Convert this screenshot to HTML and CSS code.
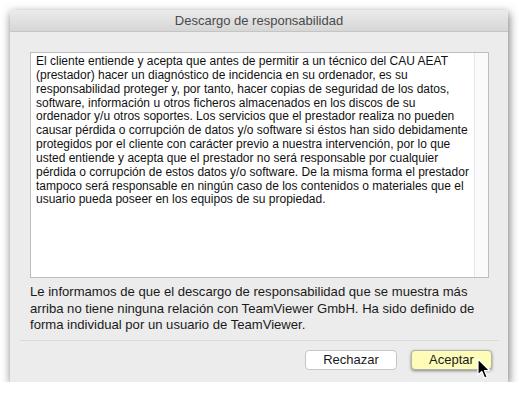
FILE: index.html
```html
<!DOCTYPE html>
<html>
<head>
    <title>Descargo de responsabilidad</title>
    <meta charset="UTF-8">
    <link rel="stylesheet" href="styles.css">
</head>
<body>
<div class="window">
    <div class="titlebar">Descargo de responsabilidad</div>

    <div class="content">
        <div class="textbox">
            <div class="text">
                El cliente entiende y acepta que antes de permitir a un técnico del CAU AEAT<br>
                (prestador) hacer un diagnóstico de incidencia en su ordenador, es su<br>
                responsabilidad proteger y, por tanto, hacer copias de seguridad de los datos,<br>
                software, información u otros ficheros almacenados en los discos de su<br>
                ordenador y/u otros soportes. Los servicios que el prestador realiza no pueden<br>
                causar pérdida o corrupción de datos y/o software si éstos han sido debidamente<br>
                protegidos por el cliente con carácter previo a nuestra intervención, por lo que<br>
                usted entiende y acepta que el prestador no será responsable por cualquier<br>
                pérdida o corrupción de estos datos y/o software. De la misma forma el prestador<br>
                tampoco será responsable en ningún caso de los contenidos o materiales que el<br>
                usuario pueda poseer en los equipos de su propiedad.
            </div>
            <div class="scrolltrack"></div>
        </div>

        <p class="notice">
            Le informamos de que el descargo de responsabilidad que se muestra más<br>
            arriba no tiene ninguna relación con TeamViewer GmbH. Ha sido definido de<br>
            forma individual por un usuario de TeamViewer.
        </p>
    </div>

    <div class="separator"></div>

    <div class="buttons">
        <button class="btn">Rechazar</button>
        <button class="btn default">Aceptar</button>
    </div>

    <svg class="cursor" width="14" height="22" viewBox="0 0 14 22">
        <path d="M1 1 L1 17 L4.8 13.4 L7.6 20 L10.2 18.9 L7.5 12.5 L12.6 12.5 Z" fill="#000" stroke="#fff" stroke-width="1.2" stroke-linejoin="round"/>
    </svg>
</div>
</body>
</html>
```

FILE: styles.css
```css
body {
    margin: 0;
    background: #fff;
    font-family: "Liberation Sans", Arial, sans-serif;
}
.window {
    position: relative;
    margin: 10px 0 0 10px;
    width: 498px;
    height: 372px;
    background: #ececec;
    box-shadow: 1px 3px 9px rgba(0, 0, 0, 0.55);
    display: flex;
    flex-direction: column;
}
.titlebar {
    height: 21px;
    line-height: 22px;
    text-align: center;
    font-size: 13px;
    color: #4a4a4a;
    background: linear-gradient(#ebebeb, #d6d6d6);
    border-bottom: 1px solid #c4c4c4;
}
.content {
    padding: 20px 19px 0 20px;
}
.textbox {
    display: flex;
    height: 224px;
    background: #fff;
    border: 1px solid #bdbdbd;
}
.text {
    flex: 1;
    padding: 2px 5px;
    font-size: 12px;
    line-height: 13.85px;
    color: #111;
    white-space: nowrap;
}
.scrolltrack {
    width: 14px;
    background: #fafafa;
    border-left: 1px solid #e6e6e6;
}
.notice {
    margin: 6px 0 0;
    font-size: 13.1px;
    line-height: 16.5px;
    color: #1a1a1a;
}
.separator {
    margin: 6px 9px 0 10px;
    height: 1px;
    background: #dadada;
}
.buttons {
    display: flex;
    justify-content: flex-end;
    gap: 14px;
    padding: 9px 16px 0 0;
}
.btn {
    height: 20px;
    padding: 0;
    font-family: inherit;
    font-size: 13px;
    color: #1a1a1a;
    background: #fff;
    border: 1px solid #c6c6c6;
    border-radius: 4px;
    width: 92px;
}
.btn.default {
    width: 81px;
    background: #fdfdb9;
    border-color: #b4b4a0;
    box-shadow: 0 1px 3px rgba(0, 0, 0, 0.45);
}
.cursor {
    position: absolute;
    left: 467px;
    top: 348px;
}
```
